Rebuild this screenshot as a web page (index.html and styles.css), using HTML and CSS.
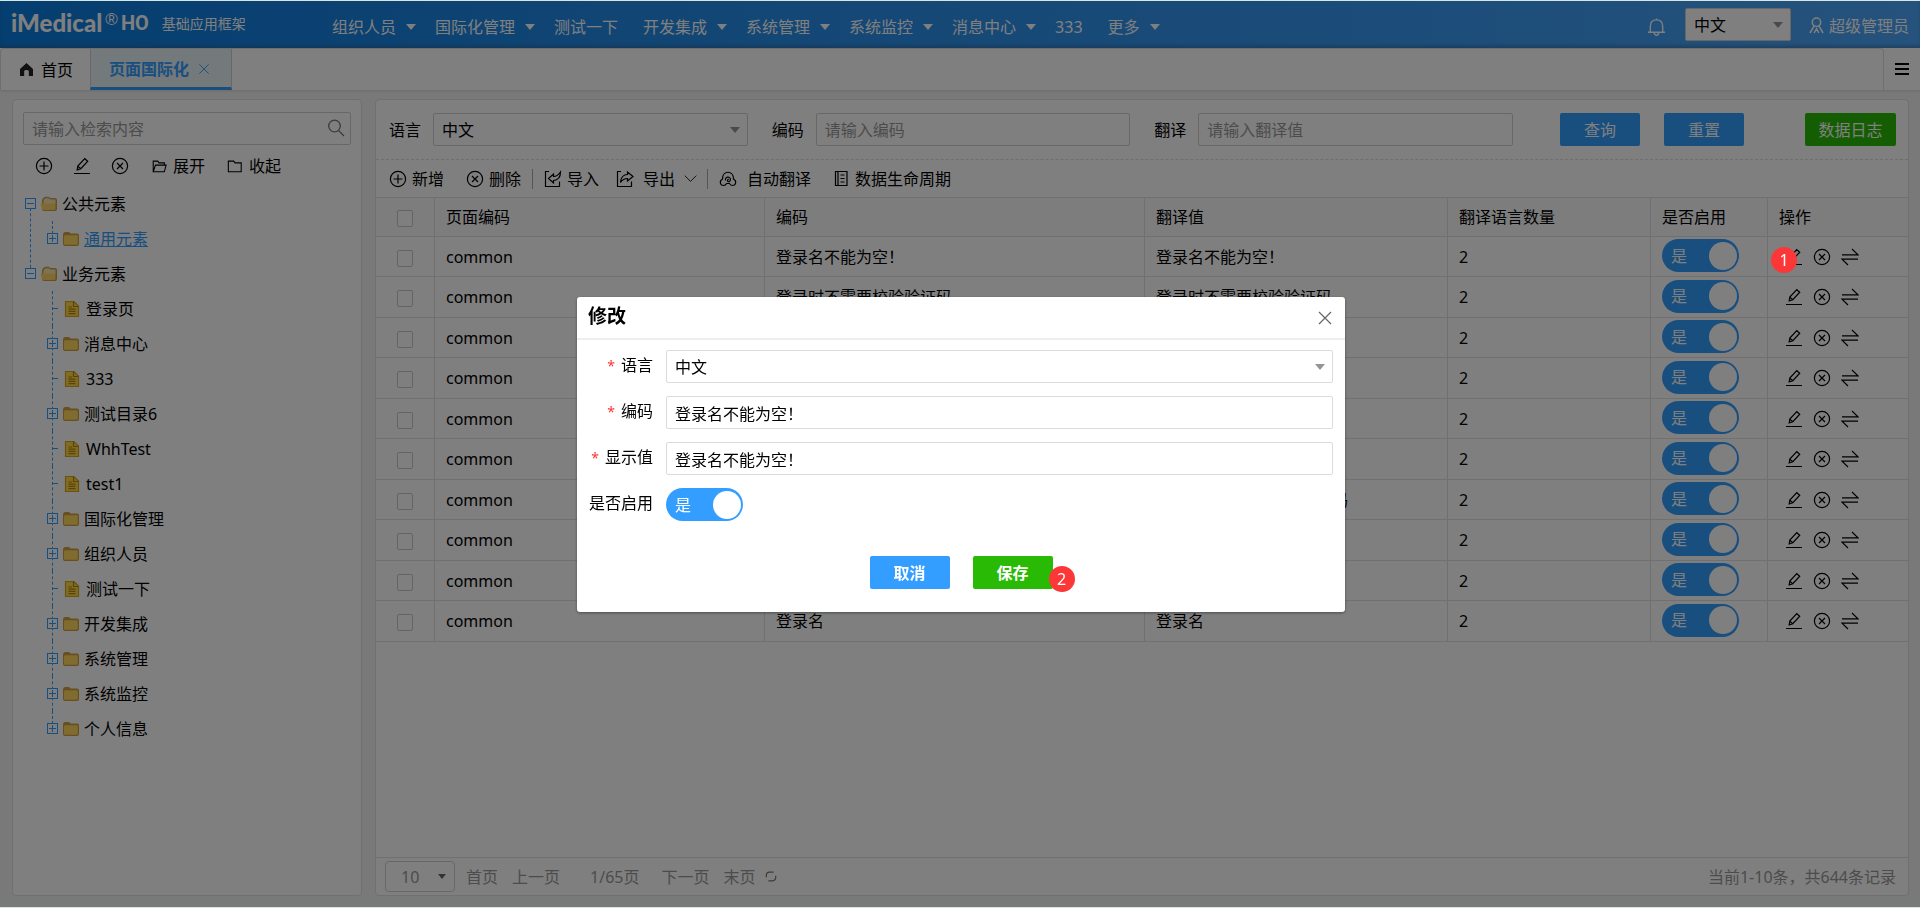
FILE: index.html
```html
<!DOCTYPE html>
<html lang="zh-CN">
<head>
<meta charset="utf-8">
<title>页面国际化</title>
<link rel="stylesheet" href="styles.css">
</head>
<body>
<svg class="sprite" aria-hidden="true">
  <symbol id="i-plus" viewBox="0 0 18 18"><circle cx="9" cy="9" r="7.6"/><path d="M9 4.5v9M4.5 9h9"/></symbol>
  <symbol id="i-cross" viewBox="0 0 18 18"><circle cx="9" cy="9" r="7.6"/><path d="M6 6l6 6M12 6l-6 6"/></symbol>
  <symbol id="i-edit" viewBox="0 0 18 18"><path d="M1 16.5h16M4.2 12.9l.6-3.8 7-7.4 2.9 2.5-6.9 7.5zM4.8 9.1l3 2.6"/></symbol>
  <symbol id="i-swap" viewBox="0 0 18 18"><path d="M1 6.8h16L11 1M17 11.2H1L7 17"/></symbol>
  <symbol id="i-open" viewBox="0 0 18 18"><path d="M2.5 15.5v-12h5l1.5 2h6v2.500M2.500 15.500l2.500-7.500h12l-2 7.500z"/></symbol>
  <symbol id="i-fold" viewBox="0 0 18 18"><path d="M1.500 15.500v-12h6l1.500 2h7v10z"/></symbol>
  <symbol id="i-import" viewBox="0 0 18 18"><path d="M5 1.500H1.500v15h14V11.500M4.500 8.500L9.500 4v2.500c3 0 5-1.500 7-4.500 0 5-2 8-7 8.500V13z"/></symbol>
  <symbol id="i-export" viewBox="0 0 18 18"><path d="M5 1.500H1.500v15h14V11.500M17 6.500L11.500 2v2.500C8 4.500 5 7 4.500 12.500c2-3 4-4 7-4V11z"/></symbol>
  <symbol id="i-cloud" viewBox="0 0 18 18"><path d="M4.500 15.500C1 15.500 0 11 3.500 9 3.500 0 14.500 0 14.500 9c3.500 2 2.500 6.500-1 6.500-1.500 0-2-.5-2.500-1.500M4.500 15.500c1.500 0 2.500-.8 3-2M6.500 10.500c-1-4 5-4.500 5-1 0 2.500-3 3-3 1s1.500-1 1.500-1M7.500 13.500h3.500"/></symbol>
  <symbol id="i-list" viewBox="0 0 18 18"><path d="M3.500 1.500h11.500v14h-11.500zM6 1.500v14M8.500 5H12.500M8.500 8.500H12.500M8.500 12H12.500"/></symbol>
  <symbol id="i-down" viewBox="0 0 18 18"><path d="M1 5l8 8 8-8"/></symbol>
  <symbol id="i-x" viewBox="0 0 18 18"><path d="M3 3l12 12M15 3L3 15"/></symbol>
  <symbol id="i-folder" viewBox="0 0 18 18"><path d="M1 4.500Q1 2 3 2H6.500Q8 2 8.500 3.500H15Q17 3.500 17 5.500V14Q17 16 15 16H3Q1 16 1 14z" fill="#cf9f45"/><path d="M2 6.500Q2 5.200 3.300 5.200H14.500Q15.800 5.200 15.800 6.500V13.500Q15.800 14.800 14.500 14.800H3.300Q2 14.800 2 13.500z" fill="#ffd85c"/></symbol>
  <symbol id="i-folder-open" viewBox="0 0 18 18"><path d="M2 5Q3 2 5.500 1.800H8.500L10.500 3H15Q17 3 17 5V14Q17 16 15 16H4Q2 16 2 14z" fill="#cf9f45"/><path d="M3.500 5.500Q4 3.500 6 3.200H8.500L10.500 4.500H15.500V9H3.500z" fill="#f6e6b4"/><path d="M.5 8.500H15.500V13.500Q15.500 15 14 15H4Q2.500 15 2 13.500z" fill="#ffd468"/></symbol>
  <symbol id="i-file" viewBox="0 0 18 18"><path d="M2.500 1.500H11L15.500 6V16.500H2.500z" fill="#ffd84a" stroke="#d6a51c" stroke-width="1.200"/><path d="M10.500 1.500V6.500H15.500M5.500 7H9M5.500 9.200H12.500M5.500 11.400H12.500M5.500 13.600H12.500" fill="none" stroke="#b78608" stroke-width="1.200"/></symbol>
</svg>

<div class="page">
  <header class="topbar">
    <h1 class="brand"><span class="brand-name">iMedical</span><span class="brand-reg">®</span><span class="brand-ho">HO</span><span class="brand-sub">基础应用框架</span></h1>
    <nav class="nav">
      <a class="nav-item has-menu" href="#">组织人员</a>
      <a class="nav-item has-menu" href="#">国际化管理</a>
      <a class="nav-item" href="#">测试一下</a>
      <a class="nav-item has-menu" href="#">开发集成</a>
      <a class="nav-item has-menu" href="#">系统管理</a>
      <a class="nav-item has-menu" href="#">系统监控</a>
      <a class="nav-item has-menu" href="#">消息中心</a>
      <a class="nav-item" href="#">333</a>
      <a class="nav-item has-menu" href="#">更多</a>
    </nav>
    <button class="bell" type="button" aria-label="消息"><svg viewBox="0 0 20 20"><path d="M1 15.500h18M3.500 15.500V9.500C3.500 5 6 2.500 10 2.500s6.500 2.500 6.500 7v6M10 2.500V1M7.500 16c.5 3.500 4.500 3.500 5 0"/></svg></button>
    <span class="select top-select"><select aria-label="界面语言"><option>中文</option></select></span>
    <a class="user" href="#"><svg viewBox="0 0 16 18"><circle cx="8" cy="5.500" r="4.500"/><path d="M5.500 9.500L1 17M10.500 9.500L15 17M5.500 17L8 12.500 10.500 17"/></svg>超级管理员</a>
  </header>

  <div class="tabs">
    <div class="tab-list">
      <a class="tab" href="#"><svg class="home" viewBox="0 0 14 14"><path d="M7 0L14 6.500V14H9.500V9Q9.500 7.500 7 7.500T4.500 9V14H0V6.500z"/></svg>首页</a>
      <a class="tab active" href="#">页面国际化<svg class="icon tab-close"><use href="#i-x"/></svg></a>
    </div>
    <button class="burger" type="button" aria-label="菜单"><span></span><span></span><span></span></button>
  </div>

  <main class="content">
    <aside class="panel side">
      <div class="search"><input type="text" placeholder="请输入检索内容" aria-label="检索"><svg viewBox="0 0 18 18"><circle cx="7.500" cy="7" r="5.800"/><path d="M11.500 11.500L17 17"/></svg></div>
      <div class="side-tools">
        <button type="button" aria-label="新增"><svg class="icon"><use href="#i-plus"/></svg></button>
        <button type="button" aria-label="修改"><svg class="icon"><use href="#i-edit"/></svg></button>
        <button type="button" aria-label="删除"><svg class="icon"><use href="#i-cross"/></svg></button>
        <button type="button" class="wide"><svg class="icon"><use href="#i-open"/></svg>展开</button>
        <button type="button" class="wide"><svg class="icon"><use href="#i-fold"/></svg>收起</button>
      </div>
      <ul class="tree">
        <li><div class="node"><i class="box minus"></i><svg class="ficon"><use href="#i-folder-open"/></svg><span>公共元素</span></div>
          <ul>
            <li><div class="node"><i class="box"></i><svg class="ficon"><use href="#i-folder"/></svg><a href="#">通用元素</a></div></li>
          </ul>
        </li>
        <li><div class="node"><i class="box minus"></i><svg class="ficon"><use href="#i-folder-open"/></svg><span>业务元素</span></div>
          <ul>
            <li><div class="node leaf"><i class="dash"></i><svg class="ficon"><use href="#i-file"/></svg><span>登录页</span></div></li>
            <li><div class="node"><i class="box"></i><svg class="ficon"><use href="#i-folder"/></svg><span>消息中心</span></div></li>
            <li><div class="node leaf"><i class="dash"></i><svg class="ficon"><use href="#i-file"/></svg><span>333</span></div></li>
            <li><div class="node"><i class="box"></i><svg class="ficon"><use href="#i-folder"/></svg><span>测试目录6</span></div></li>
            <li><div class="node leaf"><i class="dash"></i><svg class="ficon"><use href="#i-file"/></svg><span>WhhTest</span></div></li>
            <li><div class="node leaf"><i class="dash"></i><svg class="ficon"><use href="#i-file"/></svg><span>test1</span></div></li>
            <li><div class="node"><i class="box"></i><svg class="ficon"><use href="#i-folder"/></svg><span>国际化管理</span></div></li>
            <li><div class="node"><i class="box"></i><svg class="ficon"><use href="#i-folder"/></svg><span>组织人员</span></div></li>
            <li><div class="node leaf"><i class="dash"></i><svg class="ficon"><use href="#i-file"/></svg><span>测试一下</span></div></li>
            <li><div class="node"><i class="box"></i><svg class="ficon"><use href="#i-folder"/></svg><span>开发集成</span></div></li>
            <li><div class="node"><i class="box"></i><svg class="ficon"><use href="#i-folder"/></svg><span>系统管理</span></div></li>
            <li><div class="node"><i class="box"></i><svg class="ficon"><use href="#i-folder"/></svg><span>系统监控</span></div></li>
            <li><div class="node"><i class="box"></i><svg class="ficon"><use href="#i-folder"/></svg><span>个人信息</span></div></li>
          </ul>
        </li>
      </ul>
    </aside>

    <section class="panel main">
      <form class="filters">
        <div class="fields">
          <div class="field"><label for="f-lang">语言</label><span class="select"><select id="f-lang"><option>中文</option></select></span></div>
          <div class="field"><label for="f-code">编码</label><input id="f-code" type="text" placeholder="请输入编码"></div>
          <div class="field"><label for="f-text">翻译</label><input id="f-text" type="text" placeholder="请输入翻译值"></div>
        </div>
        <div class="filter-actions">
          <button class="btn" type="button">查询</button>
          <button class="btn" type="button">重置</button>
        </div>
        <button class="btn green log" type="button">数据日志</button>
      </form>

      <div class="toolbar">
        <button type="button"><svg class="icon"><use href="#i-plus"/></svg>新增</button>
        <button type="button"><svg class="icon"><use href="#i-cross"/></svg>删除</button>
        <span class="sep"></span>
        <button type="button"><svg class="icon"><use href="#i-import"/></svg>导入</button>
        <button type="button" class="export"><svg class="icon"><use href="#i-export"/></svg>导出<svg class="icon chevron"><use href="#i-down"/></svg></button>
        <span class="sep"></span>
        <button type="button" class="translate"><svg class="icon"><use href="#i-cloud"/></svg>自动翻译</button>
        <button type="button"><svg class="icon"><use href="#i-list"/></svg>数据生命周期</button>
      </div>

      <table class="grid">
        <colgroup><col class="c-check"><col class="c-page"><col class="c-code"><col class="c-value"><col class="c-count"><col class="c-on"><col></colgroup>
        <thead><tr><th class="check"><input type="checkbox" aria-label="全选"></th><th>页面编码</th><th>编码</th><th>翻译值</th><th>翻译语言数量</th><th>是否启用</th><th>操作</th></tr></thead>
        <tbody>
          <tr><td class="check"><input type="checkbox" aria-label="选择"></td><td>common</td><td>登录名不能为空！</td><td>登录名不能为空！</td><td>2</td><td><label class="switch"><input type="checkbox" checked><span>是</span></label></td><td><div class="ops"><button type="button" aria-label="修改"><svg class="icon"><use href="#i-edit"/></svg></button><button type="button" aria-label="删除"><svg class="icon"><use href="#i-cross"/></svg></button><button type="button" aria-label="切换"><svg class="icon"><use href="#i-swap"/></svg></button><span class="step step-row">1</span></div></td></tr>
          <tr><td class="check"><input type="checkbox" aria-label="选择"></td><td>common</td><td>登录时不需要校验验证码</td><td>登录时不需要校验验证码</td><td>2</td><td><label class="switch"><input type="checkbox" checked><span>是</span></label></td><td><div class="ops"><button type="button" aria-label="修改"><svg class="icon"><use href="#i-edit"/></svg></button><button type="button" aria-label="删除"><svg class="icon"><use href="#i-cross"/></svg></button><button type="button" aria-label="切换"><svg class="icon"><use href="#i-swap"/></svg></button></div></td></tr>
          <tr><td class="check"><input type="checkbox" aria-label="选择"></td><td>common</td><td>密码不能为空</td><td>密码不能为空</td><td>2</td><td><label class="switch"><input type="checkbox" checked><span>是</span></label></td><td><div class="ops"><button type="button" aria-label="修改"><svg class="icon"><use href="#i-edit"/></svg></button><button type="button" aria-label="删除"><svg class="icon"><use href="#i-cross"/></svg></button><button type="button" aria-label="切换"><svg class="icon"><use href="#i-swap"/></svg></button></div></td></tr>
          <tr><td class="check"><input type="checkbox" aria-label="选择"></td><td>common</td><td>验证码不能为空</td><td>验证码不能为空</td><td>2</td><td><label class="switch"><input type="checkbox" checked><span>是</span></label></td><td><div class="ops"><button type="button" aria-label="修改"><svg class="icon"><use href="#i-edit"/></svg></button><button type="button" aria-label="删除"><svg class="icon"><use href="#i-cross"/></svg></button><button type="button" aria-label="切换"><svg class="icon"><use href="#i-swap"/></svg></button></div></td></tr>
          <tr><td class="check"><input type="checkbox" aria-label="选择"></td><td>common</td><td>登录成功</td><td>登录成功</td><td>2</td><td><label class="switch"><input type="checkbox" checked><span>是</span></label></td><td><div class="ops"><button type="button" aria-label="修改"><svg class="icon"><use href="#i-edit"/></svg></button><button type="button" aria-label="删除"><svg class="icon"><use href="#i-cross"/></svg></button><button type="button" aria-label="切换"><svg class="icon"><use href="#i-swap"/></svg></button></div></td></tr>
          <tr><td class="check"><input type="checkbox" aria-label="选择"></td><td>common</td><td>登录失败</td><td>登录失败</td><td>2</td><td><label class="switch"><input type="checkbox" checked><span>是</span></label></td><td><div class="ops"><button type="button" aria-label="修改"><svg class="icon"><use href="#i-edit"/></svg></button><button type="button" aria-label="删除"><svg class="icon"><use href="#i-cross"/></svg></button><button type="button" aria-label="切换"><svg class="icon"><use href="#i-swap"/></svg></button></div></td></tr>
          <tr><td class="check"><input type="checkbox" aria-label="选择"></td><td>common</td><td>登录时需要校验短信验证码</td><td>登录时需要校验短信验证码</td><td>2</td><td><label class="switch"><input type="checkbox" checked><span>是</span></label></td><td><div class="ops"><button type="button" aria-label="修改"><svg class="icon"><use href="#i-edit"/></svg></button><button type="button" aria-label="删除"><svg class="icon"><use href="#i-cross"/></svg></button><button type="button" aria-label="切换"><svg class="icon"><use href="#i-swap"/></svg></button></div></td></tr>
          <tr><td class="check"><input type="checkbox" aria-label="选择"></td><td>common</td><td>验证码</td><td>验证码</td><td>2</td><td><label class="switch"><input type="checkbox" checked><span>是</span></label></td><td><div class="ops"><button type="button" aria-label="修改"><svg class="icon"><use href="#i-edit"/></svg></button><button type="button" aria-label="删除"><svg class="icon"><use href="#i-cross"/></svg></button><button type="button" aria-label="切换"><svg class="icon"><use href="#i-swap"/></svg></button></div></td></tr>
          <tr><td class="check"><input type="checkbox" aria-label="选择"></td><td>common</td><td>密码</td><td>密码</td><td>2</td><td><label class="switch"><input type="checkbox" checked><span>是</span></label></td><td><div class="ops"><button type="button" aria-label="修改"><svg class="icon"><use href="#i-edit"/></svg></button><button type="button" aria-label="删除"><svg class="icon"><use href="#i-cross"/></svg></button><button type="button" aria-label="切换"><svg class="icon"><use href="#i-swap"/></svg></button></div></td></tr>
          <tr><td class="check"><input type="checkbox" aria-label="选择"></td><td>common</td><td>登录名</td><td>登录名</td><td>2</td><td><label class="switch"><input type="checkbox" checked><span>是</span></label></td><td><div class="ops"><button type="button" aria-label="修改"><svg class="icon"><use href="#i-edit"/></svg></button><button type="button" aria-label="删除"><svg class="icon"><use href="#i-cross"/></svg></button><button type="button" aria-label="切换"><svg class="icon"><use href="#i-swap"/></svg></button></div></td></tr>
        </tbody>
      </table>

      <footer class="pager">
        <span class="select page-size"><select aria-label="每页条数"><option>10</option></select></span>
        <button type="button">首页</button>
        <button type="button">上一页</button>
        <span class="page-no">1/65页</span>
        <button type="button">下一页</button>
        <button type="button">末页</button>
        <button class="refresh" type="button" aria-label="刷新"><svg viewBox="0 0 14 14"><path d="M1.500 8V6c0-2.500 2-4 4-4h4.500M12.500 6v2c0 2.500-2 4-4 4H4M2 2v.1M12 12v.1"/></svg></button>
        <span class="summary">当前1-10条，共644条记录</span>
      </footer>
    </section>
  </main>
</div>

<div class="mask">
  <section class="dialog" role="dialog" aria-labelledby="dlg-title">
    <header class="dialog-head"><h2 id="dlg-title">修改</h2><button type="button" aria-label="关闭"><svg class="icon"><use href="#i-x"/></svg></button></header>
    <form class="dialog-body">
      <label for="d-lang"><em>*</em>语言</label><span class="select"><select id="d-lang"><option>中文</option></select></span>
      <label for="d-code"><em>*</em>编码</label><input id="d-code" type="text" value="登录名不能为空！">
      <label for="d-text"><em>*</em>显示值</label><input id="d-text" type="text" value="登录名不能为空！">
      <label for="d-on">是否启用</label><span class="switch"><input id="d-on" type="checkbox" checked><span>是</span></span>
    </form>
    <footer class="dialog-foot"><button class="btn" type="button">取消</button><span class="save"><button class="btn green" type="button">保存</button><span class="step step-save">2</span></span></footer>
  </section>
</div>
</body>
</html>
```

FILE: styles.css
```css
*, ::before, ::after { box-sizing: border-box; }
body, button, input, select {
  font-family: "Noto Sans", "Noto Sans CJK SC", sans-serif;
  font-size: 16px;
  line-height: 20px;
  color: #000;
}
body { margin: 0; background: #d8e6e2; }
button { border: 0; padding: 0; background: none; display: inline-flex; align-items: center; white-space: nowrap; }
a { color: inherit; text-decoration: none; }
ul { list-style: none; margin: 0; padding: 0; }
.sprite { display: none; }
.icon { width: 18px; height: 18px; fill: none; stroke: currentColor; stroke-width: 1.2; flex: none; }

input[type="text"], select {
  width: 100%;
  height: 33px;
  padding: 0 8px;
  border: 1px solid #cfcfcf;
  border-radius: 2px;
  background: #fff;
  outline: 0;
}
input::placeholder { color: #999; opacity: 1; }
select { appearance: none; }
.select { position: relative; display: block; }
.select::after {
  content: "";
  position: absolute;
  right: 8px;
  top: 14px;
  border: 5px solid transparent;
  border-top: 6px solid #959595;
  border-bottom: 0;
}
.btn {
  height: 33px;
  width: 80px;
  justify-content: center;
  border-radius: 2px;
  background: #339eff;
  color: #fff;
  flex: none;
}
.btn.green { background: #28ba05; }

.page { min-height: 100vh; padding: 1px 0; display: flex; flex-direction: column; }

/* Top bar */
.topbar {
  height: 47px;
  padding: 0 11px;
  display: flex;
  align-items: center;
  color: #fff;
  background: linear-gradient(90deg, #0a7ce0, #2a90ec 45%, #3a9af4 75%, #4aa6fa);
  box-shadow: inset 0 -3px 3px rgba(60, 90, 120, .35);
  position: relative;
}
.brand { display: flex; align-items: center; width: 321px; margin: 0; font-weight: 400; padding-bottom: 4px; }
.brand-name { font: 900 24px/24px Lato, sans-serif; }
.brand-reg { font: 17px/20px "Liberation Sans", sans-serif; margin: 0 3px; padding-bottom: 6px; }
.brand-ho { font: 700 20px/24px Roboto, sans-serif; }
.brand-sub { font-size: 14px; margin-left: 13px; padding-top: 2px; }
.nav { display: flex; flex: 1; padding-top: 4px; }
.nav-item { margin-right: 25px; display: flex; align-items: center; gap: 10px; white-space: nowrap; }
.nav-item.has-menu { margin-right: 19px; }
.has-menu::after { content: ""; border: 5px solid transparent; border-top: 6px solid #fff; border-bottom: 0; }
.bell { margin: 4px 19px 0 0; }
.bell svg { width: 19px; height: 20px; fill: none; stroke: #fff; stroke-width: 1.5; }
.top-select { width: 106px; margin-right: 18px; }
.user { display: flex; align-items: center; gap: 5px; padding-top: 2px; }
.user svg { width: 15px; height: 17px; fill: none; stroke: #fff; stroke-width: 1.6; }

/* Tabs */
.tabs { height: 42px; display: flex; background: #fff; box-shadow: 0 1px 3px rgba(0, 0, 0, .12); position: relative; }
.tab-list { flex: 1; display: flex; border: 1px solid #ddd; border-width: 1px 1px 0; border-radius: 4px 4px 0 0; }
.tab { display: flex; align-items: center; padding: 0 17px 0 19px; gap: 8px; }
.home { width: 13px; height: 13px; fill: #222; }
.tab.active { padding: 1px 20px 0 18px; border-bottom: 3px solid #339eff; background: #e8f3f8; color: #339eff; font-weight: 700; border-left: 1px solid #d0d0d0; border-right: 1px solid #d0d0d0; }
.tab-close { width: 14px; height: 14px; }
.burger { width: 36px; flex-direction: column; justify-content: center; gap: 3px; padding-right: 1px; }
.burger span { width: 14px; height: 2px; background: #000; }

.content { flex: 1; display: flex; gap: 13px; padding: 9px 11px 11px 12px; background: #f3f3f3; }
.panel { background: #fff; border: 1px solid #e0e0e0; border-radius: 4px; }

/* Element tree */
.side { width: 350px; padding: 12px 10px; flex: none; }
.search { position: relative; }
.search svg { position: absolute; right: 6px; top: 7px; width: 18px; height: 18px; fill: none; stroke: #777; stroke-width: 1.3; }
.side-tools { display: flex; align-items: center; gap: 20px; height: 41px; padding-left: 12px; }
.side-tools .wide { gap: 6px; margin-left: 2px; }
.side-tools .wide .icon { width: 16px; height: 16px; }
.tree { padding-left: 2px; }
.tree ul { padding-left: 22px; }
.tree li { position: relative; }
.tree li::before { content: ""; position: absolute; left: 5px; top: 0; bottom: 0; border-left: 1px dashed #339eff; }
.tree li:last-child::before { bottom: 17px; }
.tree > li:first-child::before { top: 17px; bottom: -17px; }
.tree > li:last-child::before { display: none; }
.node { display: flex; align-items: center; gap: 4px; height: 35px; }
.node a { color: #339eff; text-decoration: underline; }
.leaf { gap: 5px; }
.ficon { width: 18px; height: 18px; }
.box {
  position: relative;
  width: 11px;
  height: 11px;
  border: 1px solid #339eff;
  background:
    linear-gradient(#339eff, #339eff) center / 7px 1px no-repeat,
    linear-gradient(#339eff, #339eff) center / 1px 7px no-repeat,
    #fff;
}
.box.minus { background: linear-gradient(#339eff, #339eff) center / 7px 1px no-repeat, #fff; }
.dash { width: 11px; display: flex; justify-content: flex-end; }
.dash::before { content: ""; width: 5px; border-top: 1px dashed #339eff; }

/* Filters */
.main { flex: 1; min-width: 0; display: flex; flex-direction: column; }
.filters { display: flex; padding: 13px 12px 13px 13px; border-bottom: 1px dashed #ddd; }
.fields { flex: 1; display: flex; gap: 24px; }
.field { flex: 1; display: flex; align-items: center; gap: 12px; }
.field label { flex: none; }
.field .select { flex: 1; }
.filter-actions { display: flex; gap: 24px; margin: 0 61px 0 47px; }
.log { width: 91px; }

.toolbar { display: flex; align-items: center; height: 37px; padding-left: 13px; }
.toolbar button { gap: 5px; margin-right: 22px; }
.sep { width: 1px; height: 20px; background: #aaa; margin: 0 11px 0 -11px; }
.toolbar .sep + button { margin-right: 17px; }
.toolbar .export { gap: 9px; margin-right: 21px; }
.export .chevron { width: 13px; height: 13px; }
.toolbar .translate { gap: 10px; }
.toolbar .sep + .translate { margin-right: 21px; }

/* Data grid */
.grid { width: 100%; table-layout: fixed; border-collapse: separate; border-spacing: 0; }
.c-check { width: 59px; }
.c-page { width: 330px; }
.c-code { width: 380px; }
.c-value { width: 303px; }
.c-count { width: 203px; }
.c-on { width: 117px; }
.grid th, .grid td { padding: 0 11px; border-right: 1px solid #e0e0e0; border-bottom: 1px solid #e0e0e0; text-align: left; font-weight: 400; white-space: nowrap; height: 40px; }
.grid th:last-child, .grid td:last-child { border-right: 0; }
.grid tbody tr:nth-child(even) td { height: 41px; }
.grid th { border-top: 1px solid #e0e0e0; background: #fafafa; }
.grid .check { text-align: center; }
.check input { appearance: none; width: 16px; height: 17px; margin: 0; border: 1px solid #c8c8c8; border-radius: 2px; background: #fff; vertical-align: middle; }

.switch { display: flex; align-items: center; justify-content: space-between; width: 77px; height: 33px; padding: 0 2px 0 9px; border-radius: 17px; background: #339eff; color: #fff; }
.grid .switch { margin-bottom: 2px; }
.switch input { appearance: none; width: 28px; height: 28px; margin: 0; border-radius: 50%; background: #fff; order: 2; }
.ops { position: relative; display: flex; gap: 10px; padding-left: 6px; }

/* Numbered step markers */
.step { position: absolute; z-index: 30; width: 26px; height: 26px; border-radius: 50%; background: #fc3737; color: #fff; text-align: center; line-height: 26px; }
.step-row { left: -8px; top: -1px; }
.step-save { right: -22px; top: 10px; }

/* Pager */
.pager { margin-top: auto; height: 38px; border-top: 1px solid #e0e0e0; display: flex; align-items: center; padding: 0 12px 0 9px; color: #999; }
.pager button, .pager select { color: #999; }
.pager button { margin-right: 14px; }
.page-size { width: 70px; margin-right: 11px; }
.page-size select { height: 31px; padding: 0 15px; border-radius: 4px; }
.page-size::after { border-width: 5px 4px 0; right: 9px; top: 13px; border-top-color: #666; }
.page-no { margin: 0 22px 0 16px; }
.pager .refresh { margin: 0 0 0 -4px; }
.refresh svg { width: 12px; height: 13px; fill: none; stroke: #777; stroke-width: 1.4; }
.summary { margin-left: auto; }

/* Dialog */
.mask { position: fixed; inset: 1px 0; z-index: 20; padding: 1px 0 0 2px; background: rgba(0, 0, 0, .5); display: flex; align-items: center; justify-content: center; }
.dialog { width: 768px; background: #fff; border-radius: 3px; box-shadow: 0 1px 3px rgba(0, 0, 0, .4); }
.dialog-head { height: 43px; display: flex; justify-content: space-between; align-items: center; padding: 0 11px; border-bottom: 2px solid #eee; }
.dialog-head h2 { margin: 0; font-size: 19px; line-height: 24px; padding-bottom: 4px; }
.dialog-head .icon { stroke: #666; }
.dialog-body { display: grid; grid-template-columns: 65px 1fr; gap: 13px; align-items: center; padding: 10px 12px 0 11px; }
.dialog-body label { text-align: right; white-space: nowrap; padding-bottom: 3px; }
.dialog-body em { font-style: normal; font-size: 14px; color: #f33; margin-right: 6px; }
.dialog-body input[type="text"], .dialog-body select { border-color: #dcdcdc; }
.dialog-foot { display: flex; justify-content: center; gap: 23px; padding: 35px 0 23px; }
.dialog-foot .btn { font-weight: 700; }
.save { position: relative; display: flex; }
```
